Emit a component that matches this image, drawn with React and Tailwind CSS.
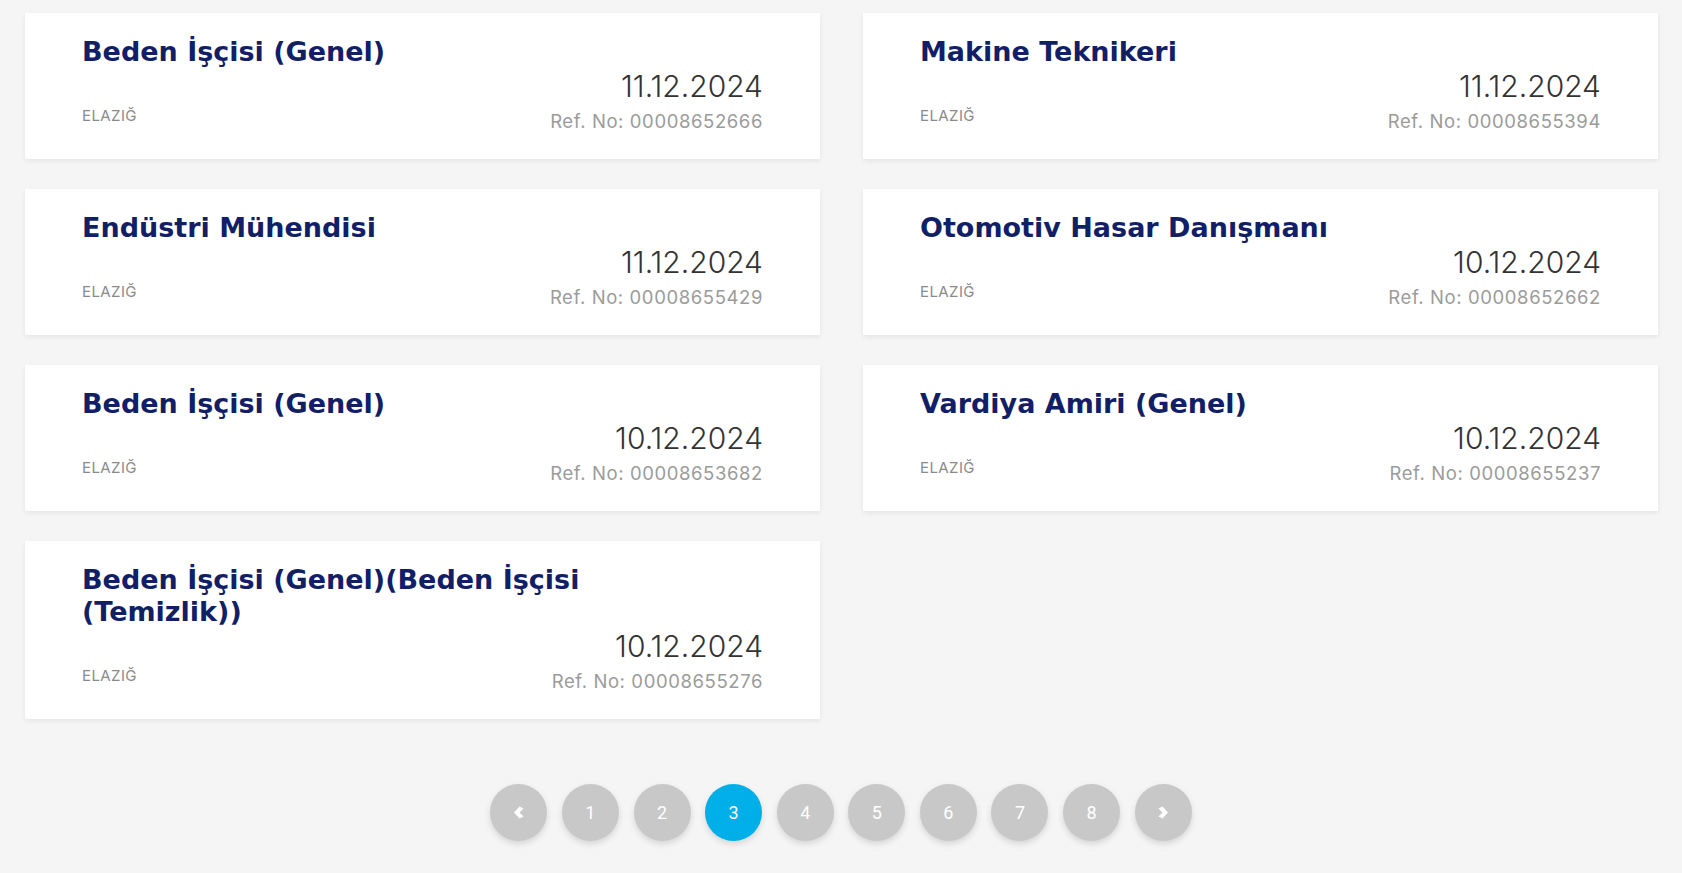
import { useState } from "react";

const jobs = [
  { title: "Beden İşçisi (Genel)", date: "11.12.2024", ref: "00008652666" },
  { title: "Makine Teknikeri", date: "11.12.2024", ref: "00008655394" },
  { title: "Endüstri Mühendisi", date: "11.12.2024", ref: "00008655429" },
  { title: "Otomotiv Hasar Danışmanı", date: "10.12.2024", ref: "00008652662" },
  { title: "Beden İşçisi (Genel)", date: "10.12.2024", ref: "00008653682" },
  { title: "Vardiya Amiri (Genel)", date: "10.12.2024", ref: "00008655237" },
  {
    title: "Beden İşçisi (Genel)(Beden İşçisi (Temizlik))",
    date: "10.12.2024",
    ref: "00008655276",
  },
];

function Chevron({ dir }) {
  return (
    <svg width="11" height="13" viewBox="0 0 11 13" fill="white">
      {dir === "left" ? (
        <polygon points="6.5,0.5 10.5,2.5 6.5,6.5 10.5,10.5 6.5,12.5 1,6.5" />
      ) : (
        <polygon points="4.5,0.5 0.5,2.5 4.5,6.5 0.5,10.5 4.5,12.5 10,6.5" />
      )}
    </svg>
  );
}

function JobCard({ job }) {
  return (
    <div className="bg-white pl-[57px] pr-[57px] pt-[23px] pb-[26px] shadow-[0_2px_5px_rgba(0,0,0,0.07)]">
      <h3 className="max-w-[520px] text-[27px] leading-[32px] font-bold text-[#121f66] font-['DejaVu_Sans',sans-serif]">
        {job.title}
      </h3>
      <div className="flex items-end justify-between">
        <span className="mb-[7px] text-[15px] leading-[20px] tracking-[0.4px] uppercase text-[#8a8a8a]">
          ELAZIĞ
        </span>
        <div className="flex flex-col items-end">
          <span className="mt-[1px] text-[30px] leading-[34px] font-light text-[#333]">
            {job.date}
          </span>
          <span className="mt-[6px] text-[18.5px] leading-[24px] tracking-[0.6px] text-[#9b9b9b]">
            Ref. No: {job.ref}
          </span>
        </div>
      </div>
    </div>
  );
}

export default function App() {
  const [page, setPage] = useState(3);
  const pages = [1, 2, 3, 4, 5, 6, 7, 8];

  return (
    <div className="min-h-screen bg-[#f5f5f5] pt-[13px] pl-[25px] pr-[24px] font-['Inter',sans-serif]">
      <div className="grid grid-cols-2 gap-x-[43px] gap-y-[30px] items-start">
        {jobs.map((job, i) => (
          <JobCard key={i} job={job} />
        ))}
      </div>

      <div className="flex justify-center gap-[14.6px] mt-[65px] pr-[1px]">
        <button
          className="w-[57px] h-[57px] rounded-full bg-[#c8c8c8] flex items-center justify-center shadow-[0_3px_6px_rgba(0,0,0,0.13)]"
          onClick={() => setPage(Math.max(1, page - 1))}
        >
          <Chevron dir="left" />
        </button>
        {pages.map((p) => (
          <button
            key={p}
            onClick={() => setPage(p)}
            className={
              "w-[57px] h-[57px] rounded-full flex items-center justify-center text-white text-[18px] font-['Roboto',sans-serif] shadow-[0_3px_6px_rgba(0,0,0,0.13)] " +
              (p === page ? "bg-[#00aee8]" : "bg-[#c8c8c8]")
            }
          >
            {p}
          </button>
        ))}
        <button
          className="w-[57px] h-[57px] rounded-full bg-[#c8c8c8] flex items-center justify-center shadow-[0_3px_6px_rgba(0,0,0,0.13)]"
          onClick={() => setPage(Math.min(8, page + 1))}
        >
          <Chevron dir="right" />
        </button>
      </div>
    </div>
  );
}
